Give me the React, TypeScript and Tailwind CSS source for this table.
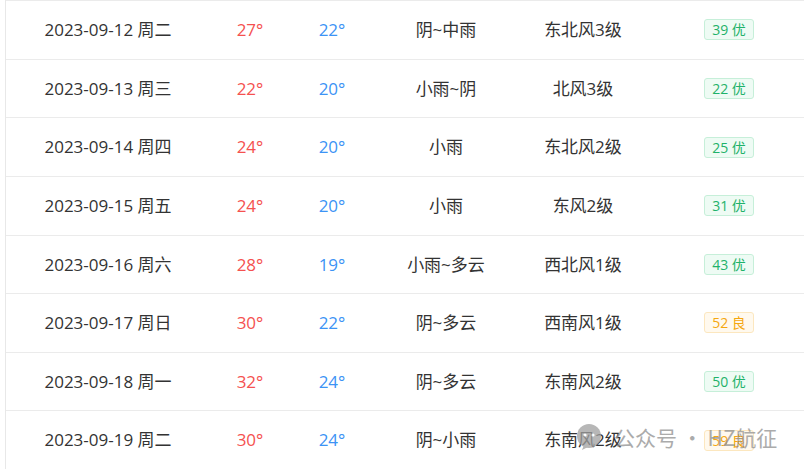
import React from "react";

type Row = {
  date: string;
  hi: string;
  lo: string;
  weather: string;
  wind: string;
  aqi: string;
  good: boolean;
};

const rows: Row[] = [
  { date: "2023-09-12 周二", hi: "27°", lo: "22°", weather: "阴~中雨", wind: "东北风3级", aqi: "39 优", good: true },
  { date: "2023-09-13 周三", hi: "22°", lo: "20°", weather: "小雨~阴", wind: "北风3级", aqi: "22 优", good: true },
  { date: "2023-09-14 周四", hi: "24°", lo: "20°", weather: "小雨", wind: "东北风2级", aqi: "25 优", good: true },
  { date: "2023-09-15 周五", hi: "24°", lo: "20°", weather: "小雨", wind: "东风2级", aqi: "31 优", good: true },
  { date: "2023-09-16 周六", hi: "28°", lo: "19°", weather: "小雨~多云", wind: "西北风1级", aqi: "43 优", good: true },
  { date: "2023-09-17 周日", hi: "30°", lo: "22°", weather: "阴~多云", wind: "西南风1级", aqi: "52 良", good: false },
  { date: "2023-09-18 周一", hi: "32°", lo: "24°", weather: "阴~多云", wind: "东南风2级", aqi: "50 优", good: true },
  { date: "2023-09-19 周二", hi: "30°", lo: "24°", weather: "阴~小雨", wind: "东南风2级", aqi: "59 良", good: false },
];

export default function App() {
  return (
    <div
      className="relative w-[804px] h-[469px] overflow-hidden bg-white text-[#333333]"
      style={{ fontFamily: '"Open Sans", "Noto Sans CJK SC", sans-serif' }}
    >
      <div className="ml-[5px] border-l border-[#e8e8e8]">
        {rows.map((r, i) => (
          <div
            key={i}
            className="grid grid-cols-[204px_80px_84px_144px_130px_1fr] items-center h-[58.625px] border-t border-[#ebebeb] text-[17px]"
          >
            <div className="text-center">{r.date}</div>
            <div className="text-center text-[#f5514f]">{r.hi}</div>
            <div className="text-center text-[#3c93f5]">{r.lo}</div>
            <div className="text-center">{r.weather}</div>
            <div className="text-center">{r.wind}</div>
            <div className="flex justify-center pl-[6px]">
              {r.good ? (
                <span className="inline-flex items-center justify-center w-[50px] h-[21px] rounded-[3px] border border-[#c6efd9] bg-[#eefbf4] text-[#1fb26a] text-[14px] whitespace-pre">
                  {r.aqi}
                </span>
              ) : (
                <span className="inline-flex items-center justify-center w-[50px] h-[21px] rounded-[3px] border border-[#fce7bf] bg-[#fff9ee] text-[#f5a70f] text-[14px] whitespace-pre">
                  {r.aqi}
                </span>
              )}
            </div>
          </div>
        ))}
      </div>

      <div
        className="absolute left-[577px] top-[424px] flex items-center gap-[13px] opacity-75 pointer-events-none"
        style={{ fontFamily: '"Noto Sans CJK SC", sans-serif' }}
      >
        <svg width="24" height="26" viewBox="0 0 24 26">
          <circle cx="12" cy="12" r="12" fill="#a0a0a0" />
          <circle cx="8" cy="11" r="1.6" fill="#ffffff" />
          <circle cx="16" cy="11" r="1.6" fill="#ffffff" />
          <path d="M7 21 L5 26 L11 23 Z" fill="#a0a0a0" />
        </svg>
        <span className="text-[21px] text-[#909090] whitespace-pre leading-none">公众号 · HZ航征</span>
      </div>
    </div>
  );
}
